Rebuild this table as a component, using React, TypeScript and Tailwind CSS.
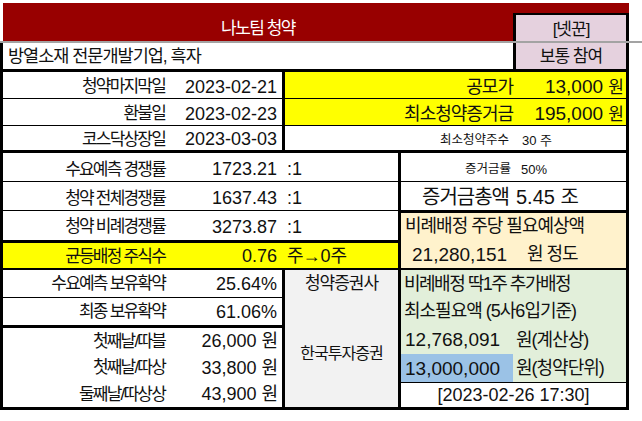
const KR = "tracking-[-1px]";
const LBL = "text-[17px] tracking-[-1.8px]";

function LabelRow({
  label,
  value,
  h,
  line,
  extra,
  bg,
}: {
  label: string;
  value: React.ReactNode;
  h: string;
  line?: string;
  extra?: React.ReactNode;
  bg?: string;
}) {
  return (
    <div className={`flex items-center ${h} ${line ?? ""} ${bg ?? ""} border-black`}>
      <div className={`w-[170px] pr-[8px] text-right ${LBL}`}>{label}</div>
      <div className="w-[109px] pr-[5px] text-right text-[18px]">{value}</div>
      {extra}
    </div>
  );
}

export default function App() {
  return (
    <div className="h-[421px] w-[642px] overflow-hidden bg-white font-['Liberation_Sans','Noto_Sans_CJK_KR',sans-serif] leading-none text-[#111]">
      <div className="h-[3px]" />

      {/* title bar */}
      <div className="ml-[3px] flex h-[38px] w-[626px] bg-[#980000]">
        <div className="flex flex-1 items-end justify-center pb-[4px] text-[17px] tracking-[-1.5px] text-white">
          나노팀 청약
        </div>
        <div className={`mt-[10px] flex w-[116px] items-center justify-center border-x-[3px] border-t-[2px] border-black bg-[#e5d1de] pt-[2px] text-[17px] ${KR}`}>
          [넷꾼]
        </div>
      </div>
      <div className="h-[2px] w-full bg-[#a3a3a3]" />

      <div className="w-[629px] border-x-[3px] border-b-[3px] border-black">
        {/* summary */}
        <div className="flex h-[29px] border-b-[3px] border-black">
          <div className={`flex flex-1 items-center pl-[5px] pt-[2px] text-[17.5px] ${KR}`}>
            방열소재 전문개발기업, 흑자
          </div>
          <div className={`flex w-[113px] items-center justify-center border-l-[3px] border-black bg-[#e5d1de] text-[17px] ${KR}`}>
            보통 참여
          </div>
        </div>

        {/* dates / price */}
        <div className="flex border-b-[3px] border-black">
          <div className="w-[282px] border-r-[3px] border-black">
            <LabelRow label="청약마지막일" value="2023-02-21" h="h-[27px] pt-[3px]" line="border-b" />
            <LabelRow label="환불일" value="2023-02-23" h="h-[27px] pt-[3px]" line="border-b" />
            <LabelRow label="코스닥상장일" value="2023-03-03" h="h-[24px] pt-[2px]" />
          </div>
          <div className="flex-1">
            <div className="flex h-[27px] items-center border-b border-black bg-[#ffff00] pt-[3px]">
              <div className={`w-[231px] pr-[3px] text-right text-[18px] ${KR}`}>공모가</div>
              <div className="flex-1 pr-[3px] text-right text-[19px]">
                13,000 <span className={`text-[17px] ${KR}`}>원</span>
              </div>
            </div>
            <div className="flex h-[27px] items-center border-b border-black bg-[#ffff00] pt-[3px]">
              <div className={`w-[231px] pr-[3px] text-right text-[18px] ${KR}`}>최소청약증거금</div>
              <div className="flex-1 pr-[3px] text-right text-[19px]">
                195,000 <span className={`text-[17px] ${KR}`}>원</span>
              </div>
            </div>
            <div className="flex h-[24px] items-center pt-[4px]">
              <div className="w-[228px] pr-[4px] text-right text-[12.5px]">최소청약주수</div>
              <div className="pl-[9px] text-[13px]">30 주</div>
            </div>
          </div>
        </div>

        {/* competition rates */}
        <div className="flex border-b-[2px] border-black">
          <div className="w-[398px] border-r-[3px] border-black">
            <LabelRow
              label="수요예측 경쟁률"
              value="1723.21"
              h="h-[29px] pt-[4px]"
              line="border-b"
              extra={<div className="pl-[5px] text-[18px]">:1</div>}
            />
            <LabelRow
              label="청약 전체경쟁률"
              value="1637.43"
              h="h-[29px] pt-[4px]"
              line="border-b"
              extra={<div className="pl-[5px] text-[18px]">:1</div>}
            />
            <LabelRow
              label="청약 비례경쟁률"
              value="3273.87"
              h="h-[32px] pt-[2px]"
              line="border-b-[3px]"
              extra={<div className="pl-[5px] text-[18px]">:1</div>}
            />
            <LabelRow
              label="균등배정 주식수"
              value="0.76"
              h="h-[25px] pt-[1px]"
              bg="bg-[#ffff00]"
              extra={
                <div className="pl-[5px] text-[18px]">
                  <span className={KR}>주</span>→0<span className={KR}>주</span>
                </div>
              }
            />
          </div>
          <div className="flex-1">
            <div className="flex h-[29px] items-center border-b border-black pt-[4px]">
              <div className="w-[114px] pr-[4px] text-right text-[12.5px]">증거금률</div>
              <div className="pl-[6px] text-[13px]">50%</div>
            </div>
            <div className="flex h-[31px] items-center border-b-[3px] border-black pt-[2px]">
              <div className={`w-[110px] pr-[2px] text-right text-[20px] ${KR}`}>증거금총액</div>
              <div className="pl-[5px] text-[20px]">
                5.45 <span className={KR}>조</span>
              </div>
            </div>
            <div className="flex h-[55px] flex-col justify-center gap-[10px] bg-[#fff2cc]">
              <div className={`pl-[4px] text-[18px] ${KR}`}>비례배정 주당 필요예상액</div>
              <div className="flex text-[19px]">
                <span className="w-[115px] pl-[11px]">21,280,151</span>
                <span className={`pl-[11px] text-[18px] ${KR}`}>원 정도</span>
              </div>
            </div>
          </div>
        </div>

        {/* holding / broker / allotment */}
        <div className="flex">
          <div className="w-[282px] border-r-[3px] border-black">
            <LabelRow label="수요예측 보유확약" value="25.64%" h="h-[28px]" line="border-b" />
            <LabelRow label="최종 보유확약" value="61.06%" h="h-[30px]" line="border-b-[3px]" />
            <LabelRow label="첫째날/따블" value={<>26,000 <span className={KR}>원</span></>} h="h-[26px]" />
            <LabelRow label="첫째날/따상" value={<>33,800 <span className={KR}>원</span></>} h="h-[27px]" />
            <LabelRow label="둘째날/따상상" value={<>43,900 <span className={KR}>원</span></>} h="h-[26px]" />
          </div>
          <div className="flex w-[116px] flex-col border-r-[3px] border-black bg-[#f2f2f2]">
            <div className={`flex h-[27px] items-center justify-center text-[17px] ${KR}`}>청약증권사</div>
            <div className={`flex flex-1 items-center justify-center pt-[4px] text-[16px] ${KR}`}>한국투자증권</div>
          </div>
          <div className="flex-1">
            <div className="bg-[#e2efda]">
              <div className="flex h-[27px] items-center pl-[3px] text-[18px] tracking-[-1.5px]">비례배정 딱1주 추가배정</div>
              <div className={`flex h-[28px] items-center pl-[3px] text-[18px] ${KR}`}>최소필요액 (5사6입기준)</div>
              <div className="flex h-[29px] items-center text-[19px]">
                <span className="w-[115px] pl-[4px]">12,768,091</span>
                <span className={`text-[18px] ${KR}`}>원(계산상)</span>
              </div>
              <div className="flex h-[29px] items-stretch border-b border-black text-[19px]">
                <span className="flex w-[112px] items-center bg-[#9bc2e6] pl-[4px]">13,000,000</span>
                <span className={`flex items-center pl-[3px] text-[18px] ${KR}`}>원(청약단위)</span>
              </div>
            </div>
            <div className="flex h-[24px] items-center justify-center text-[18px]">[2023-02-26 17:30]</div>
          </div>
        </div>
      </div>
    </div>
  );
}
